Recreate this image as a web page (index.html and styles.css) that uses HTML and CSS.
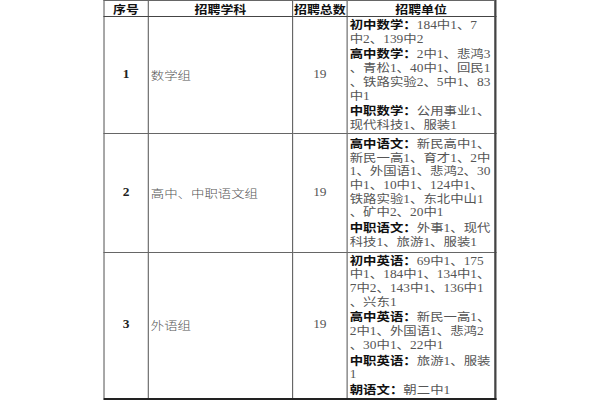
FILE: index.html
```html
<!DOCTYPE html>
<html lang="zh">
<head>
<meta charset="utf-8">
<link rel="stylesheet" href="styles.css">
</head>
<body>
<table class="plan">
  <colgroup>
    <col class="c-no"><col class="c-subj"><col class="c-total"><col class="c-unit">
  </colgroup>
  <thead>
    <tr class="head">
      <th>序号</th><th>招聘学科</th><th>招聘总数</th><th>招聘单位</th>
    </tr>
  </thead>
  <tbody>
    <tr class="r1">
      <td class="no">1</td>
      <td class="subj">数学组</td>
      <td class="total">19</td>
      <td class="unit"><b>初中数学：</b>184中1、7<br>中2、139中2<br><b>高中数学：</b>2中1、悲鸿3<br>、青松1、40中1、回民1<br>、铁路实验2、5中1、83<br>中1<br><b>中职数学：</b>公用事业1、<br>现代科技1、服装1</td>
    </tr>
    <tr class="r2">
      <td class="no">2</td>
      <td class="subj">高中、中职语文组</td>
      <td class="total">19</td>
      <td class="unit"><b>高中语文：</b>新民高中1、<br>新民一高1、育才1、2中<br>1、外国语1、悲鸿2、30<br>中1、10中1、124中1、<br>铁路实验1、东北中山1<br>、矿中2、20中1<br><b>中职语文：</b>外事1、现代<br>科技1、旅游1、服装1</td>
    </tr>
    <tr class="r3">
      <td class="no">3</td>
      <td class="subj">外语组</td>
      <td class="total">19</td>
      <td class="unit"><b>初中英语：</b>69中1、175<br>中1、184中1、134中1、<br>7中2、143中1、136中1<br>、兴东1<br><b>高中英语：</b>新民一高1、<br>2中1、外国语1、悲鸿2<br>、30中1、22中1<br><b>中职英语：</b>旅游1、服装<br>1<br><b>朝语文：</b>朝二中1</td>
    </tr>
  </tbody>
</table>
</body>
</html>
```
FILE: styles.css
```css
html, body {
  margin: 0;
  padding: 0;
  background: #ffffff;
}

.plan {
  width: 345px;
  margin: 0 auto;
  border-collapse: collapse;
  table-layout: fixed;
  transform: scaleX(1.136);
  transform-origin: 50% 0;
  font-family: "Liberation Serif", "Noto Sans CJK SC", serif;
  font-size: 11.8px;
  line-height: 13.7px;
  color: #555555;
  border-left: 1px solid #888888;
  border-right: 2px solid #444444;
  border-bottom: 2px solid #222222;
  border-top: 1px solid #777777;
}

.c-no { width: 38.7px; }
.c-subj { width: 127.6px; }
.c-total { width: 47.5px; }
.c-unit { width: 131.2px; }

.plan th,
.plan td {
  border: 1px solid #666666;
  padding: 0 2px;
  vertical-align: middle;
}

.head {
  height: 16px;
}

.plan th {
  font-family: "Noto Sans CJK SC", sans-serif;
  font-weight: 700;
  font-size: 11.4px;
  line-height: 14px;
  color: #111111;
  text-align: center;
  white-space: nowrap;
  padding: 0;
  border-bottom: 1px solid #444444;
}

.r1 { height: 116px; }
.r2 { height: 119px; }
.r3 { height: 145px; }

.no {
  text-align: center;
  font-weight: 700;
  color: #222222;
}

.subj {
  text-align: left;
  font-family: "Noto Sans CJK SC", sans-serif;
  font-weight: 300;
}

.total {
  text-align: center;
}

.unit {
  white-space: nowrap;
  overflow: hidden;
}

.unit b {
  font-family: "Noto Sans CJK SC", sans-serif;
  font-weight: 700;
  color: #111111;
}
```
